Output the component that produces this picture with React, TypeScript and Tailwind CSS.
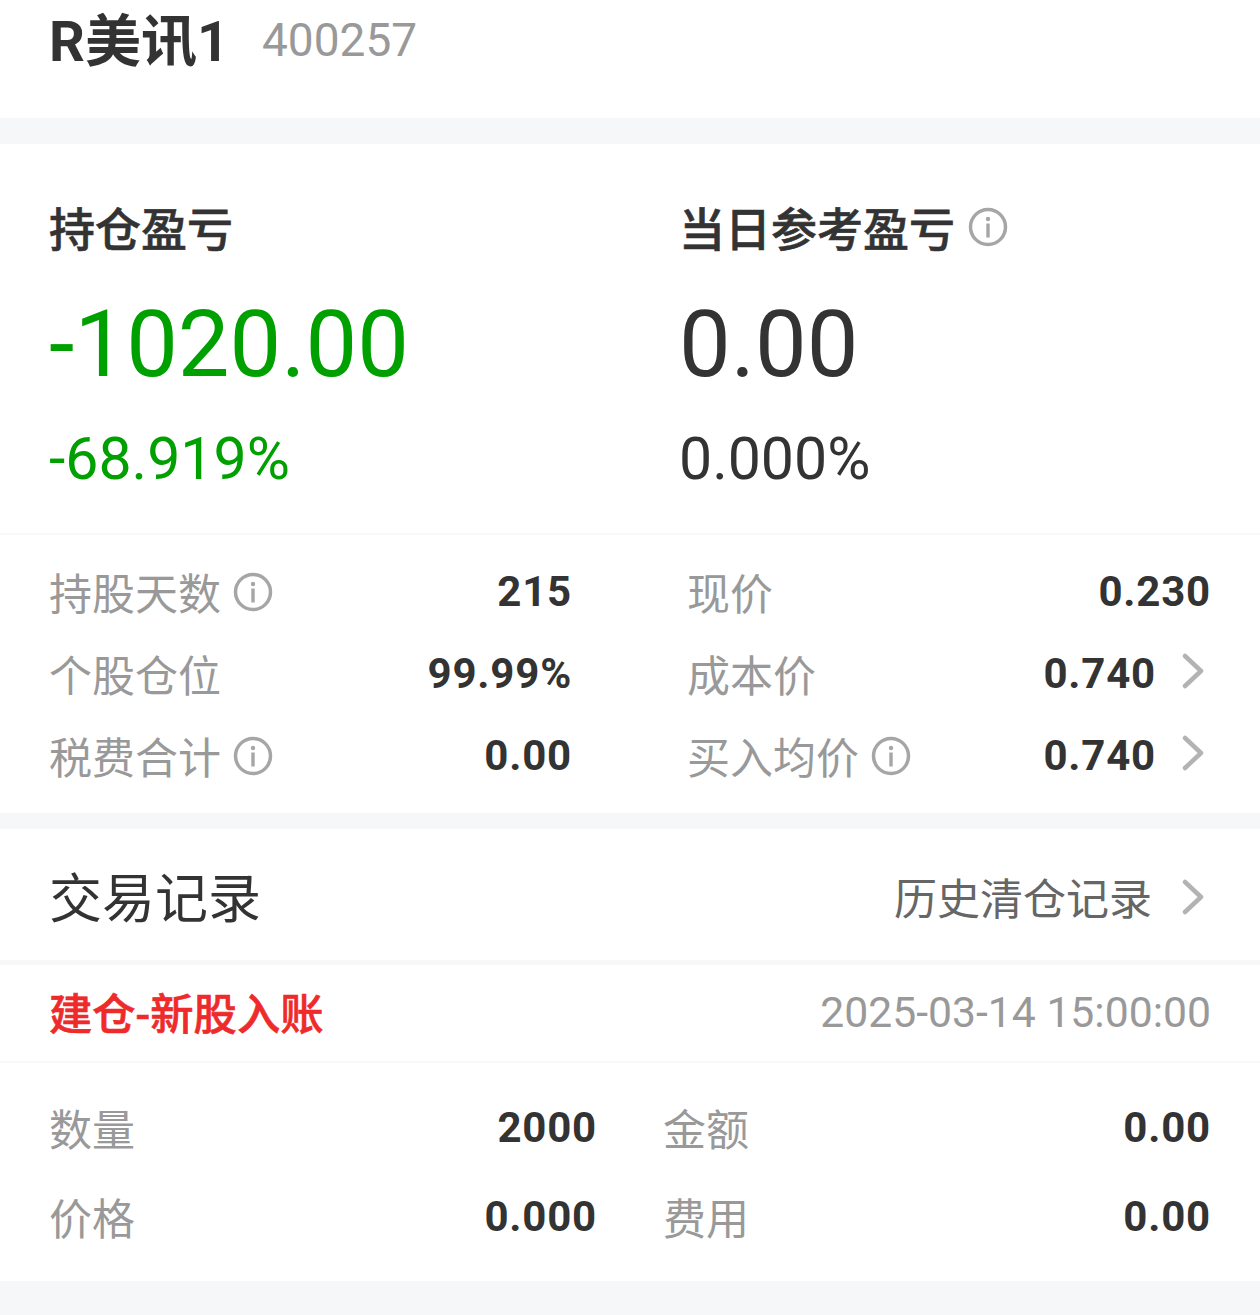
import React from 'react';

const Info: React.FC = () => (
  <svg className="w-[40px] h-[40px] shrink-0 -translate-y-[1px]" viewBox="0 0 40 40" fill="none">
    <circle cx="20" cy="20" r="17.5" stroke="#a6a6a6" strokeWidth="3.5" />
    <circle cx="20" cy="12" r="2.2" fill="#a6a6a6" />
    <rect x="18.3" y="16.5" width="3.4" height="14" fill="#a6a6a6" />
  </svg>
);

const Chevron: React.FC = () => (
  <svg className="w-[22px] h-[36px] shrink-0" viewBox="0 0 22 36" fill="none">
    <path d="M3 3L19 18L3 33" stroke="#b3b3b3" strokeWidth="4.5" strokeLinecap="round" strokeLinejoin="round" />
  </svg>
);

const Stat: React.FC<{ label: string; value: string; info?: boolean; arrow?: boolean }> = ({ label, value, info, arrow }) => (
  <div className="h-[82px] flex items-center justify-between">
    <div className="flex items-center gap-[12px]">
      <span className="text-[43px] leading-[50px] text-[#999] translate-y-[2px]">{label}</span>
      {info && <Info />}
    </div>
    <div className="flex items-center gap-[26px] pr-[7px]">
      <span className={`text-[42px] leading-[50px] font-bold text-[#333] tracking-[0.8px] -translate-y-[1px] ${arrow ? '' : '-mr-[7px]'}`}>{value}</span>
      {arrow && <div className="-translate-y-[4px]"><Chevron /></div>}
    </div>
  </div>
);

const Trade: React.FC<{ label: string; value: string }> = ({ label, value }) => (
  <div className="h-[89px] flex items-center justify-between">
    <span className="text-[43px] leading-[50px] text-[#999]">{label}</span>
    <span className="text-[42px] leading-[50px] font-bold text-[#333] tracking-[0.8px] -translate-y-[3px]">{value}</span>
  </div>
);

export default function App() {
  return (
    <div className="w-[1260px] h-[1315px] bg-[#f6f7f9] font-['Roboto','Noto_Sans_CJK_SC',sans-serif] overflow-hidden">
      <div className="h-[118px] bg-white flex items-start pl-[49px] pt-[10px] gap-[33px]">
        <span className="text-[56px] leading-[64px] font-bold text-[#333]">R美讯1</span>
        <span className="text-[46px] leading-[60px] text-[#999]">400257</span>
      </div>

      <div className="mt-[26px] h-[669px] bg-white">
        <div className="h-[391px] border-b-2 border-[#f8f8f8] grid grid-cols-[630px_1fr] pl-[49px] pt-[56px]">
          <div>
            <div className="h-[60px] flex items-center text-[46px] leading-[60px] font-medium [-webkit-text-stroke:0.6px_#333] text-[#333]">持仓盈亏</div>
            <div className="mt-[33px] text-[92px] leading-[104px] text-[#00a000]">-1020.00</div>
            <div className="mt-[29px] text-[59px] leading-[66px] text-[#00a000]">-68.919%</div>
          </div>
          <div>
            <div className="h-[60px] flex items-center gap-[13px] text-[46px] leading-[60px] font-medium [-webkit-text-stroke:0.6px_#333] text-[#333]">
              当日参考盈亏
              <div className="-translate-y-[2px]"><Info /></div>
            </div>
            <div className="mt-[33px] text-[92px] leading-[104px] text-[#333]">0.00</div>
            <div className="mt-[29px] text-[59px] leading-[66px] text-[#333]">0.000%</div>
          </div>
        </div>
        <div className="grid grid-cols-[523px_524px] gap-x-[115px] pl-[49px] pt-[17px]">
          <div>
            <Stat label="持股天数" value="215" info />
            <Stat label="个股仓位" value="99.99%" />
            <Stat label="税费合计" value="0.00" info />
          </div>
          <div>
            <Stat label="现价" value="0.230" />
            <Stat label="成本价" value="0.740" arrow />
            <Stat label="买入均价" value="0.740" info arrow />
          </div>
        </div>
      </div>

      <div className="mt-[16px] h-[452px] bg-white">
        <div className="h-[136px] flex items-center justify-between pl-[49px] pr-[56px] border-b-[5px] border-[#f8f8f8]">
          <span className="text-[53px] leading-[60px] text-[#333] translate-y-[5px]">交易记录</span>
          <div className="flex items-center gap-[30px]">
            <span className="text-[43px] leading-[50px] text-[#666] translate-y-[5px]">历史清仓记录</span>
            <div className="translate-y-[2px]"><Chevron /></div>
          </div>
        </div>
        <div className="h-[98px] flex items-center justify-between pl-[49px] pr-[49px] border-b-2 border-[#f8f8f8]">
          <span className="text-[43.3px] leading-[50px] font-medium [-webkit-text-stroke:0.6px_#ee2a2a] text-[#ee2a2a] translate-y-[3px]">建仓-新股入账</span>
          <span className="text-[42.7px] leading-[50px] text-[#999] -translate-y-[1px]">2025-03-14 15:00:00</span>
        </div>
        <div className="grid grid-cols-[548px_548px] gap-x-[66px] pl-[49px] pt-[23px]">
          <div>
            <Trade label="数量" value="2000" />
            <Trade label="价格" value="0.000" />
          </div>
          <div>
            <Trade label="金额" value="0.00" />
            <Trade label="费用" value="0.00" />
          </div>
        </div>
      </div>
    </div>
  );
}
